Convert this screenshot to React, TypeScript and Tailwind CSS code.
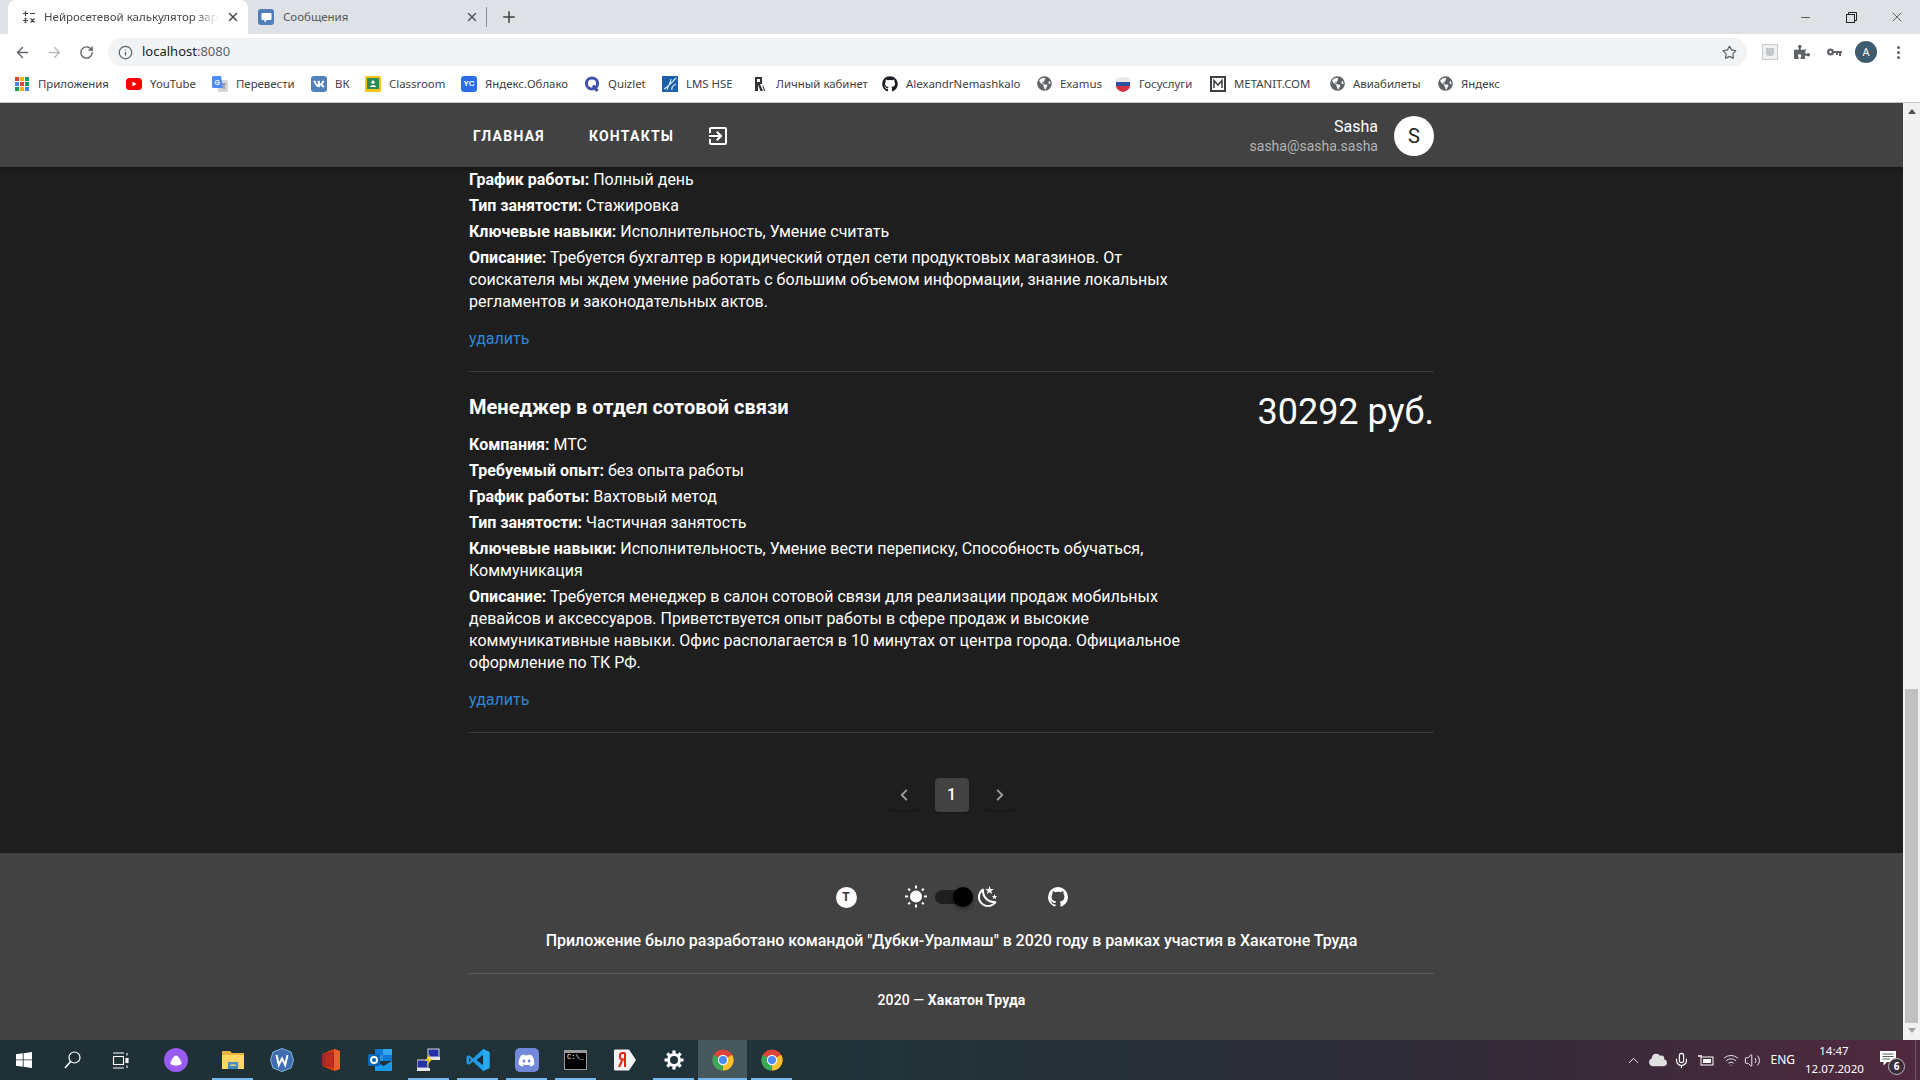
import React from "react";
import { ArrowLeft, ArrowRight, RotateCw, Info, Star, X, Plus, Minus, ChevronLeft, ChevronRight, ChevronUp, Mic, Volume2, Wifi } from "lucide-react";
import { FaGithub, FaVk, FaDiscord, FaGlobeAmericas, FaPuzzlePiece, FaCloud } from "react-icons/fa";

const chromeFont = "font-['Noto_Sans','Open_Sans',sans-serif]";

const GITHUB = "M12,2A10,10 0 0,0 2,12C2,16.42 4.87,20.17 8.84,21.5C9.34,21.58 9.5,21.27 9.5,21C9.5,20.77 9.5,20.14 9.5,19.31C6.73,19.91 6.14,17.97 6.14,17.97C5.68,16.81 5.03,16.5 5.03,16.5C4.12,15.88 5.1,15.9 5.1,15.9C6.1,15.97 6.63,16.93 6.63,16.93C7.5,18.45 8.97,18 9.54,17.76C9.63,17.11 9.89,16.67 10.17,16.42C7.95,16.17 5.62,15.31 5.62,11.5C5.62,10.39 6,9.5 6.65,8.79C6.55,8.54 6.2,7.5 6.75,6.15C6.75,6.15 7.59,5.88 9.5,7.17C10.29,6.95 11.15,6.84 12,6.84C12.85,6.84 13.71,6.95 14.5,7.17C16.41,5.88 17.25,6.15 17.25,6.15C17.8,7.5 17.45,8.54 17.35,8.79C18,9.5 18.38,10.39 18.38,11.5C18.38,15.32 16.04,16.16 13.81,16.41C14.17,16.72 14.5,17.33 14.5,18.26C14.5,19.6 14.5,20.68 14.5,21C14.5,21.27 14.66,21.59 15.17,21.5C19.14,20.16 22,16.42 22,12A10,10 0 0,0 12,2Z";

function Chrome({ size = 22 }: { size?: number }) {
  return (
    <svg width={size} height={size} viewBox="0 0 24 24">
      <circle cx="12" cy="12" r="11.5" fill="#db4437" />
      <path d="M12 12 L22 6.2 A11.5 11.5 0 0 1 12 23.5 Z" fill="#fbc02d" />
      <path d="M12 12 L12 23.5 A11.5 11.5 0 0 1 2 6.2 Z" fill="#3aa757" />
      <circle cx="12" cy="12" r="5.6" fill="#fff" />
      <circle cx="12" cy="12" r="4.4" fill="#4a8af4" />
    </svg>
  );
}

const bookmarks: { label: string; cell: string; icon: React.ReactNode }[] = [
  {
    label: "Приложения",
    cell: "w-[112px]",
    icon: (
      <svg width="16" height="16" viewBox="0 0 16 16">
        {[
          ["#db4437", 1, 1], ["#f4b400", 6, 1], ["#0f9d58", 11, 1],
          ["#4285f4", 1, 6], ["#db4437", 6, 6], ["#0f9d58", 11, 6],
          ["#0f9d58", 1, 11], ["#f4b400", 6, 11], ["#4285f4", 11, 11],
        ].map(([c, x, y], i) => (
          <rect key={i} x={x as number} y={y as number} width="4" height="4" fill={c as string} />
        ))}
      </svg>
    ),
  },
  {
    label: "YouTube",
    cell: "w-[86px]",
    icon: (
      <svg width="16" height="16" viewBox="0 0 16 16">
        <rect x="0" y="2" width="16" height="12" rx="3.5" fill="#f00" />
        <path d="M6.4 5.4 L10.6 8 L6.4 10.6 Z" fill="#fff" />
      </svg>
    ),
  },
  {
    label: "Перевести",
    cell: "w-[99px]",
    icon: (
      <svg width="16" height="16" viewBox="0 0 16 16">
        <rect x="6" y="4" width="10" height="12" rx="1" fill="#d5d5d5" />
        <path d="M10 8 L14 8 M12 8 L12 13" stroke="#777" strokeWidth="1" />
        <path d="M1.5 0 H9 L11 12 H1.5 A1.5 1.5 0 0 1 0 10.5 V1.5 A1.5 1.5 0 0 1 1.5 0 Z" fill="#4c8bf5" />
        <text x="2.5" y="8.5" fontSize="7" fontWeight="700" fill="#fff" fontFamily="Liberation Sans">G</text>
      </svg>
    ),
  },
  {
    label: "ВК",
    cell: "w-[54px]",
    icon: (
      <span className="w-4 h-4 rounded-[3px] bg-[#5181b8] flex items-center justify-center text-white">
        <FaVk size={12} />
      </span>
    ),
  },
  {
    label: "Classroom",
    cell: "w-[96px]",
    icon: (
      <svg width="16" height="16" viewBox="0 0 16 16">
        <rect width="16" height="16" rx="1.5" fill="#f5c518" />
        <rect x="2" y="2" width="12" height="11" fill="#2e8b57" />
        <circle cx="8" cy="6.2" r="1.6" fill="#fff" />
        <path d="M4.8 11 C5 8.8 11 8.8 11.2 11 Z" fill="#fff" />
      </svg>
    ),
  },
  {
    label: "Яндекс.Облако",
    cell: "w-[123px]",
    icon: (
      <span className="w-4 h-4 rounded-[3px] bg-[#2a6fe8] flex items-center justify-center text-white text-[8px] font-bold font-['Liberation_Sans',sans-serif]">
        YC
      </span>
    ),
  },
  {
    label: "Quizlet",
    cell: "w-[78px]",
    icon: (
      <svg width="16" height="16" viewBox="0 0 16 16">
        <circle cx="8" cy="7.5" r="5.6" fill="none" stroke="#3f51a8" strokeWidth="3" />
        <path d="M9 9.5 L13.5 15" stroke="#3f51a8" strokeWidth="3" />
      </svg>
    ),
  },
  {
    label: "LMS HSE",
    cell: "w-[90px]",
    icon: (
      <svg width="16" height="16" viewBox="0 0 16 16">
        <rect width="16" height="16" fill="#1d5fa8" />
        <path d="M2 13 C7 10 10 6 14 2 M5 14 C6 9 9 7 9 3 M10 14 C9 11 12 9 14 8" stroke="#dcecf8" strokeWidth="1.1" fill="none" />
      </svg>
    ),
  },
  {
    label: "Личный кабинет",
    cell: "w-[130px]",
    icon: (
      <svg width="16" height="16" viewBox="0 0 16 16">
        <path d="M3 1 H10 V8 H8 L11 15 H8.5 L6 9 V15 H3 Z" fill="#333" />
        <path d="M5 3 H8 V6 H5 Z" fill="#fff" />
        <path d="M11 9 L13.5 15 H12 L10.5 11 Z" fill="#555" />
      </svg>
    ),
  },
  { label: "AlexandrNemashkalo", cell: "w-[154px]", icon: <FaGithub size={16} color="#1b1f23" /> },
  { label: "Examus", cell: "w-[79px]", icon: <FaGlobeAmericas size={15} color="#5f6368" /> },
  {
    label: "Госуслуги",
    cell: "w-[95px]",
    icon: (
      <svg width="16" height="16" viewBox="0 0 16 16">
        <path d="M1 3 C4 0.5 12 0.5 15 3 V6 H1 Z" fill="#e8e8e8" />
        <rect x="1" y="6" width="14" height="4" fill="#2b4fa3" />
        <path d="M1 10 H15 C15 13 11 15.5 8 16 C5 15.5 1 13 1 10 Z" fill="#d6303c" />
      </svg>
    ),
  },
  {
    label: "METANIT.COM",
    cell: "w-[119px]",
    icon: (
      <svg width="16" height="16" viewBox="0 0 16 16">
        <rect x="1" y="1" width="14" height="14" fill="none" stroke="#3c4043" strokeWidth="2" />
        <path d="M4 12 V4.5 L8 9 L12 4.5 V12" fill="none" stroke="#3c4043" strokeWidth="1.5" />
      </svg>
    ),
  },
  { label: "Авиабилеты", cell: "w-[108px]", icon: <FaGlobeAmericas size={15} color="#5f6368" /> },
  { label: "Яндекс", cell: "w-[80px]", icon: <FaGlobeAmericas size={15} color="#5f6368" /> },
];

function ChromeBar() {
  return (
    <div className={`${chromeFont} shrink-0 bg-white border-b border-[#c8c8c8]`}>
      <div className="h-[34px] bg-[#dee1e6] flex items-stretch pl-2">
        <div className="w-[240px] bg-white rounded-t-lg flex items-center pl-3.5 pr-2 gap-2">
          <svg width="14" height="14" viewBox="0 0 14 14" className="shrink-0" stroke="#3c4043" strokeWidth="1.1" fill="none">
            <path d="M1 3.5 H6 M3.5 1 V6 M8 3.5 H13 M1 10.5 H6 M8.5 8.5 L12.5 12.5 M12.5 8.5 L8.5 12.5" />
            <circle cx="3.5" cy="8.7" r=".5" fill="#3c4043" />
            <circle cx="3.5" cy="12.3" r=".5" fill="#3c4043" />
          </svg>
          <span className="flex-1 overflow-hidden whitespace-nowrap text-[11.5px] text-[#45494d] [mask-image:linear-gradient(to_right,black_88%,transparent)]">
            Нейросетевой калькулятор заработной платы
          </span>
          <X size={14} strokeWidth={2.5} color="#45494d" className="shrink-0" />
        </div>
        <div className="w-[236px] flex items-center pl-2.5 pr-[5px] gap-2">
          <span className="w-4 h-4 rounded-[3px] bg-[#4f7fb5] flex items-center justify-center shrink-0">
            <svg width="11" height="11" viewBox="0 0 11 11"><path d="M1.5 1 H9.5 A1 1 0 0 1 10.5 2 V7 A1 1 0 0 1 9.5 8 H6 L3.5 10.5 V8 H1.5 A1 1 0 0 1 .5 7 V2 A1 1 0 0 1 1.5 1 Z" fill="#fff" /></svg>
          </span>
          <span className="flex-1 text-[11.5px] ml-px text-[#55595e]">Сообщения</span>
          <X size={14} strokeWidth={2.5} color="#55595e" />
        </div>
        <div className="flex items-center">
          <span className="w-px h-5 bg-[#8a8e93] ml-0.5" />
          <Plus size={18} strokeWidth={2} color="#3c4043" className="ml-[13px]" />
        </div>
        <div className="flex-1 flex items-center justify-end text-[#222]">
          <span className="w-[46px] flex justify-center"><Minus size={13} strokeWidth={1.3} /></span>
          <span className="w-[46px] flex justify-center">
            <svg width="11" height="11" viewBox="0 0 11 11" fill="none" stroke="#222"><path d="M2.5 2.5 V.5 H10.5 V8.5 H8.5" /><rect x=".5" y="2.5" width="8" height="8" /></svg>
          </span>
          <span className="w-[46px] flex justify-center"><X size={16} strokeWidth={1} /></span>
        </div>
      </div>
      <div className="h-[34px] flex items-start pt-1 pl-1.5">
        <div className="h-7 flex items-center text-[#5f6368]">
          <span className="w-8 flex justify-center"><ArrowLeft size={17} strokeWidth={2} /></span>
          <span className="w-8 flex justify-center"><ArrowRight size={17} strokeWidth={2} color="#b6b9bd" /></span>
          <span className="w-8 flex justify-center"><RotateCw size={15} strokeWidth={2.2} /></span>
        </div>
        <div className="h-7 ml-1.5 w-[1639px] bg-[#f1f3f4] rounded-full flex items-center pl-2.5 pr-2.5">
          <Info size={15} color="#5f6368" />
          <span className="ml-[9px] text-[13px] text-[#202124]">localhost<span className="text-[#5f6368]">:8080</span></span>
          <Star size={15} color="#5f6368" className="ml-auto" />
        </div>
        <div className="h-7 flex-1 flex items-center text-[#5f6368]">
          <span className="ml-[15px] w-4 h-4 border border-[#c9ccd0] bg-[#eef0f1] flex items-center justify-center">
            <span className="w-2 h-2 rounded-b-[3px] bg-[#c4c8cc]" />
          </span>
          <FaPuzzlePiece size={16} className="ml-[16px]" />
          <svg width="15" height="9" viewBox="0 0 15 9" className="ml-[17px]" fill="#5f6368">
            <path fillRule="evenodd" d="M3.5 0.5 A3.5 3.5 0 1 1 3.5 7.5 A3.5 3.5 0 1 1 3.5 0.5 Z M3.5 2.8 A1.2 1.2 0 1 0 3.5 5.2 A1.2 1.2 0 1 0 3.5 2.8 Z" />
            <path d="M6 3 H15 V5 H14 V8 H12 V5 H11 V7 H9 V5 H6 Z" />
          </svg>
          <span className="ml-[13px] w-[22px] h-[22px] rounded-full bg-[#3f5b6f] text-white text-[11px] flex items-center justify-center">A</span>
          <span className="ml-5 flex flex-col gap-[2px]">
            <span className="w-[3px] h-[3px] rounded-full bg-[#5f6368]" />
            <span className="w-[3px] h-[3px] rounded-full bg-[#5f6368]" />
            <span className="w-[3px] h-[3px] rounded-full bg-[#5f6368]" />
          </span>
        </div>
      </div>
      <div className="h-[34px] flex items-center pl-3.5 pb-0.5">
        {bookmarks.map((b) => (
          <div key={b.label} className={`${b.cell} flex items-center gap-2 shrink-0`}>
            <span className="w-4 h-4 flex items-center justify-center shrink-0">{b.icon}</span>
            <span className="text-[11.4px] text-[#3c4043] whitespace-nowrap">{b.label}</span>
          </div>
        ))}
      </div>
    </div>
  );
}

function Row({ k, v }: { k: string; v: string }) {
  return (
    <p className="mb-1 leading-[22px]">
      <b className="font-bold">{k}:</b> {v}
    </p>
  );
}

function Page() {
  return (
    <div className="flex-1 min-w-0 flex flex-col overflow-hidden font-['Roboto',sans-serif] text-white">
      <header className="h-16 shrink-0 bg-[#424242] shadow-[0_2px_4px_rgba(0,0,0,0.3)] z-10 pt-px">
        <div className="w-[965px] mx-auto h-full flex items-center">
          <span className="ml-1 mt-px text-[14px] font-bold tracking-[1.25px]">ГЛАВНАЯ</span>
          <span className="ml-11 mt-px text-[14px] font-bold tracking-[1.25px]">КОНТАКТЫ</span>
          <svg width="24" height="24" viewBox="0 0 24 24" fill="#fff" className="ml-[32px]">
            <path d="M10.09,15.59L11.5,17L16.5,12L11.5,7L10.09,8.41L12.67,11H3V13H12.67L10.09,15.59M19,3H5C3.89,3 3,3.9 3,5V9H5V5H19V19H5V15H3V19A2,2 0 0,0 5,21H19A2,2 0 0,0 21,19V5C21,3.9 20.1,3 19,3Z" />
          </svg>
          <div className="ml-auto text-right">
            <div className="text-[16px] leading-[20px]">Sasha</div>
            <div className="text-[14px] leading-[18px] text-[#b5b5b5]">sasha@sasha.sasha</div>
          </div>
          <span className="ml-4 w-10 h-10 rounded-full bg-white text-[#222] text-[20px] flex items-center justify-center">S</span>
        </div>
      </header>
      <main className="flex-1 min-h-0 overflow-hidden bg-[#1e1e1e]">
        <div className="w-[965px] mx-auto text-[16px] pt-[2px]">
          <Row k="График работы" v="Полный день" />
          <Row k="Тип занятости" v="Стажировка" />
          <Row k="Ключевые навыки" v="Исполнительность, Умение считать" />
          <p className="leading-[22px] w-[724px]">
            <b className="font-bold">Описание:</b> Требуется бухгалтер в юридический отдел сети продуктовых магазинов. От соискателя мы ждем умение работать с большим объемом информации, знание локальных регламентов и законодательных актов.
          </p>
          <div className="mt-[15px] pb-[21px] leading-[22px] text-[#2f87d2] border-b border-[#3a3a3a]">удалить</div>
          <div className="pt-[19px] pb-[21px] border-b border-[#3a3a3a]">
            <div className="flex justify-between items-start">
              <h2 className="text-[20px] font-bold leading-8 mb-[11px]">Менеджер в отдел сотовой связи</h2>
              <div className="text-[36px] leading-10 mt-px">30292 руб.</div>
            </div>
            <div className="w-[724px]">
              <Row k="Компания" v="МТС" />
              <Row k="Требуемый опыт" v="без опыта работы" />
              <Row k="График работы" v="Вахтовый метод" />
              <Row k="Тип занятости" v="Частичная занятость" />
              <Row k="Ключевые навыки" v="Исполнительность, Умение вести переписку, Способность обучаться, Коммуникация" />
              <p className="leading-[22px]">
                <b className="font-bold">Описание:</b> Требуется менеджер в салон сотовой связи для реализации продаж мобильных девайсов и аксессуаров. Приветствуется опыт работы в сфере продаж и высокие коммуникативные навыки. Офис располагается в 10 минутах от центра города. Официальное оформление по ТК РФ.
              </p>
            </div>
            <div className="mt-[15px] leading-[22px] text-[#2f87d2]">удалить</div>
          </div>
          <div className="mt-[45px] flex justify-center items-center gap-[15px]">
            <span className="w-8 h-[30px] rounded bg-[#1e1e1e] shadow-[0_1px_2px_rgba(0,0,0,0.25)] flex items-center justify-center"><ChevronLeft size={18} color="#9a9a9a" strokeWidth={2.5} /></span>
            <span className="w-[34px] h-[34px] rounded bg-[#424242] shadow-[0_1px_2px_rgba(0,0,0,0.3)] flex items-center justify-center text-[16px] font-medium">1</span>
            <span className="w-8 h-[30px] rounded bg-[#1e1e1e] shadow-[0_1px_2px_rgba(0,0,0,0.25)] flex items-center justify-center"><ChevronRight size={18} color="#9a9a9a" strokeWidth={2.5} /></span>
          </div>
        </div>
      </main>
      <footer className="h-[187px] shrink-0 bg-[#424242] pt-8">
        <div className="w-[965px] mx-auto">
          <div className="h-6 flex items-center justify-center pl-0.5">
            <span className="w-[21px] h-[21px] rounded-full bg-white text-[#333] text-[12px] font-bold flex items-center justify-center">T</span>
            <svg width="24" height="24" viewBox="0 0 24 24" fill="#fff" className="ml-[47px]">
              <path d="M3.55,18.54L4.96,19.95L6.76,18.16L5.34,16.74M11,22.45C11.32,22.45 13,22.45 13,22.45V19.5H11M12,5.5A6,6 0 0,0 6,11.5A6,6 0 0,0 12,17.5A6,6 0 0,0 18,11.5C18,8.18 15.31,5.5 12,5.5M20,12.5H23V10.5H20M17.24,18.16L19.04,19.95L20.45,18.54L18.66,16.74M20.45,4.46L19.04,3.05L17.24,4.84L18.66,6.26M13,0.55H11V3.5H13M4,10.5H1V12.5H4M6.76,4.84L4.96,3.05L3.55,4.46L5.34,6.26L6.76,4.84Z" />
            </svg>
            <span className="ml-[7px] w-[38px] h-5 flex items-center justify-end relative">
              <span className="absolute left-0 w-[34px] h-3.5 rounded-full bg-[#1f1f1f]" />
              <span className="relative w-5 h-5 rounded-full bg-black shadow-[0_2px_4px_rgba(0,0,0,0.4)]" />
            </span>
            <svg width="24" height="24" viewBox="0 0 24 24" fill="#fff" className="ml-[3px]">
              <path d="M17.75,4.09L15.22,6.03L16.13,9.09L13.5,7.28L10.87,9.09L11.78,6.03L9.25,4.09L12.44,4L13.5,1L14.56,4L17.75,4.09M21.25,11L19.61,12.25L20.2,14.23L18.5,13.06L16.8,14.23L17.39,12.25L15.75,11L17.81,10.95L18.5,9L19.19,10.95L21.25,11M18.97,15.95C19.8,15.87 20.69,17.05 20.16,17.8C19.84,18.25 19.5,18.67 19.08,19.07C15.17,23 8.84,23 4.94,19.07C1.03,15.17 1.03,8.83 4.94,4.93C5.34,4.53 5.76,4.17 6.21,3.85C6.96,3.32 8.14,4.21 8.06,5.04C7.79,7.9 8.75,10.87 10.95,13.06C13.14,15.26 16.1,16.22 18.97,15.95M17.33,17.97C14.5,17.81 11.7,16.64 9.53,14.5C7.36,12.31 6.2,9.5 6.04,6.68C3.23,9.82 3.34,14.64 6.35,17.66C9.37,20.67 14.19,20.78 17.33,17.97Z" />
            </svg>
            <svg width="24" height="24" viewBox="0 0 24 24" fill="#fff" className="ml-[46px]"><path d={GITHUB} /></svg>
          </div>
          <p className="mt-5 text-center text-[16px] leading-6 font-medium tracking-[-0.05px]">
            Приложение было разработано командой "Дубки-Уралмаш" в 2020 году в рамках участия в Хакатоне Труда
          </p>
          <div className="mt-5 border-t border-[#5a5a5a] pt-4 text-center text-[14px] leading-5 font-medium tracking-[0.1px]">
            2020 — <b className="font-bold">Хакатон Труда</b>
          </div>
        </div>
      </footer>
    </div>
  );
}

function Scrollbar() {
  return (
    <div className="w-[17px] shrink-0 bg-[#f1f1f1] flex flex-col items-center justify-between">
      <div className="flex-1 w-full flex flex-col items-center">
        <span className="mt-[6px] w-0 h-0 border-x-[4px] border-x-transparent border-b-[5px] border-b-[#505050]" />
        <span className="mt-[575px] w-[13px] h-[334px] bg-[#c1c1c1]" />
        <span className="mt-[5px] w-0 h-0 border-x-[4px] border-x-transparent border-t-[5px] border-t-[#a3a3a3]" />
      </div>
    </div>
  );
}

const taskIcons: { key: string; on?: boolean; active?: boolean; el: React.ReactNode }[] = [
  {
    key: "explorer", on: true,
    el: (
      <svg width="24" height="24" viewBox="0 0 24 24">
        <path d="M1 3 H9 L11 5 H23 V21 H1 Z" fill="#e8b53c" />
        <rect x="1" y="7" width="22" height="14" fill="#ffd762" />
        <path d="M7 20 V14 H17 V20 H14.5 V16.5 H9.5 V20 Z" fill="#4a90c8" />
        <rect x="7" y="18" width="10" height="3" fill="#3a88c4" />
      </svg>
    ),
  },
  {
    key: "word",
    el: (
      <svg width="24" height="24" viewBox="0 0 24 24">
        <path d="M12 0.5 L21 4 L23.5 12 L21 20 L12 23.5 L3 20 L0.5 12 L3 4 Z" fill="#3f6db4" stroke="#7fb2d8" />
        <path d="M6.5 7 L8.8 17 L12 10.5 L15.2 17 L17.5 7" fill="none" stroke="#fff" strokeWidth="2" />
      </svg>
    ),
  },
  {
    key: "office",
    el: (
      <svg width="24" height="24" viewBox="0 0 24 24">
        <path d="M3 6 L15 1 L21 3 V21 L15 23 L3 18 Z" fill="#d83b01" />
        <path d="M15 1 L21 3 V21 L15 23 Z" fill="#e8602c" />
        <path d="M3 6 L15 4 V19 L3 18 Z" fill="#a4262c" />
        <path d="M6.5 7.5 L14 5.5 V18 L6.5 16.5 Z" fill="#eb3c00" opacity=".35" />
      </svg>
    ),
  },
  {
    key: "outlook",
    el: (
      <svg width="24" height="24" viewBox="0 0 24 24">
        <rect x="7" y="1" width="17" height="12" fill="#0f78d4" />
        <rect x="15" y="1" width="9" height="6" fill="#35a4ee" />
        <rect x="7" y="7" width="8" height="6" fill="#2b8fe0" />
        <path d="M7 13 L15.5 18 L24 13 V23 H7 Z" fill="#1a9be8" />
        <rect x="0" y="6" width="12" height="12" rx="1" fill="#0a64b4" />
        <circle cx="6" cy="12" r="3" fill="none" stroke="#fff" strokeWidth="1.8" />
      </svg>
    ),
  },
  {
    key: "network", on: true,
    el: (
      <svg width="24" height="24" viewBox="0 0 24 24">
        <rect x="11" y="1" width="11" height="8" fill="#2233a8" stroke="#d8d8d8" />
        <rect x="10" y="9" width="13" height="3" fill="#e4e4e4" />
        <rect x="0" y="12" width="11" height="8" fill="#2233a8" stroke="#d8d8d8" />
        <rect x="0" y="20" width="13" height="3" fill="#e4e4e4" />
        <path d="M13 6 L8 13 L12 12.5 L9 18 L16 10.5 L12 11 Z" fill="#f5d20e" />
      </svg>
    ),
  },
  {
    key: "vscode", on: true,
    el: (
      <svg width="24" height="24" viewBox="0 0 24 24">
        <path d="M17 1 L23.5 4 V20 L17 23 L7 13.5 L3 16.7 L0.5 15.5 V8.5 L3 7.3 L7 10.5 Z" fill="#1c9be8" />
        <path d="M17 7 L10.5 12 L17 17 Z" fill="#20262c" />
        <path d="M17 1 L23.5 4 V20 L17 23 Z" fill="#27a9f0" />
        <path d="M3 9.8 L5 12 L3 14.2 Z" fill="#20262c" />
      </svg>
    ),
  },
  {
    key: "discord", on: true,
    el: (
      <span className="w-[24px] h-[24px] rounded-[5px] bg-[#7289da] flex items-center justify-center text-white"><FaDiscord size={17} /></span>
    ),
  },
  {
    key: "cmd", on: true,
    el: (
      <span className="w-[23px] h-[20px] bg-black border border-[#9a9a9a] border-t-[3px] text-white text-[7px] leading-[7px] font-['Liberation_Mono',monospace] pl-[2px] pt-[1px]">C:\_</span>
    ),
  },
  {
    key: "yandex",
    el: (
      <svg width="24" height="24" viewBox="0 0 24 24">
        <path d="M2 1.5 H16 L23 12 L16 22.5 H2 A1.5 1.5 0 0 1 1 21 V3 A1.5 1.5 0 0 1 2 1.5 Z" fill="#f4f4f4" />
        <path d="M12 5 V19 M12 5 H9.5 C6 5 6 11.5 9.5 11.5 H12 M9.5 11.5 L6 19" fill="none" stroke="#e2231a" strokeWidth="2" />
      </svg>
    ),
  },
  {
    key: "settings", on: true,
    el: (
      <svg width="20" height="20" viewBox="0 0 20 20">
        <circle cx="10" cy="10" r="5.5" fill="none" stroke="#fff" strokeWidth="3" />
        <g stroke="#fff" strokeWidth="3.2">
          <path d="M10 0.5 V3.5 M10 16.5 V19.5 M0.5 10 H3.5 M16.5 10 H19.5 M3.3 3.3 L5.4 5.4 M14.6 14.6 L16.7 16.7 M16.7 3.3 L14.6 5.4 M5.4 14.6 L3.3 16.7" />
        </g>
      </svg>
    ),
  },
  { key: "chrome", on: true, active: true, el: <Chrome /> },
  { key: "chrome2", on: true, el: <Chrome /> },
];

function Taskbar() {
  return (
    <div className={`${chromeFont} h-10 shrink-0 flex items-stretch text-white bg-[linear-gradient(to_right,#1f2f36_0%,#21333a_45%,#2f2b36_75%,#50293f_100%)]`}>
      <div className="w-12 flex items-center justify-center">
        <svg width="16" height="16" viewBox="0 0 16 16" fill="#fff">
          <path d="M0 2.3 L6.8 1.3 V7.5 H0 Z M7.6 1.2 L16 0 V7.5 H7.6 Z M0 8.3 H6.8 V14.7 L0 13.7 Z M7.6 8.3 H16 V16 L7.6 14.8 Z" />
        </svg>
      </div>
      <div className="w-12 flex items-center justify-center">
        <svg width="17" height="18" viewBox="0 0 17 18" fill="none" stroke="#fff" strokeWidth="1.2">
          <circle cx="10.5" cy="6.5" r="5.5" />
          <path d="M6.6 10.4 L1 17" strokeWidth="1.5" />
        </svg>
      </div>
      <div className="w-12 flex items-center justify-center">
        <svg width="17" height="17" viewBox="0 0 17 17" fill="none" stroke="#fff" strokeWidth="1.1">
          <path d="M1 1 H12 M1 16 H12" /><rect x="1.5" y="4.5" width="10" height="8" />
          <path d="M15 1 V3.5 M15 13.5 V16" /><rect x="14" y="6.5" width="2" height="4" fill="#fff" />
        </svg>
      </div>
      <div className="w-[64px] flex items-center justify-center">
        <span className="w-6 h-6 rounded-full bg-[#9a5bf0] flex items-center justify-center">
          <svg width="12" height="11" viewBox="0 0 12 11"><path d="M6 0.5 C8 0.5 11.5 6 11.5 8 C11.5 10 8.5 10.5 6 10.5 C3.5 10.5 0.5 10 0.5 8 C0.5 6 4 0.5 6 0.5 Z" fill="#fff" /></svg>
        </span>
      </div>
      {taskIcons.map((t) => (
        <div key={t.key} className={`w-[49px] flex items-center justify-center relative ${t.active ? "bg-[#46585c]" : ""}`}>
          {t.el}
          {t.on && <span className={`absolute bottom-0 h-0.5 bg-[#76b9ed] ${t.active ? "left-0 right-0" : "left-1 right-1"}`} />}
        </div>
      ))}
      <div className="flex-1 flex items-center justify-end">
        <ChevronUp size={17} strokeWidth={1.3} />
        <FaCloud size={18} className="ml-[7px]" color="#e0e0e0" />
        <Mic size={17} strokeWidth={1.6} className="ml-[6px]" />
        <svg width="16" height="11" viewBox="0 0 16 11" className="ml-[8px]">
          <rect x="3" y="2" width="12" height="8" fill="none" stroke="#fff" />
          <rect x="5" y="4" width="8" height="4" fill="#fff" />
          <path d="M0 1 H4 M1 0 V2 M3 0 V2" stroke="#fff" />
        </svg>
        <Wifi size={16} strokeWidth={1.4} className="ml-[9px] opacity-90" />
        <Volume2 size={17} strokeWidth={1.3} className="ml-[5px]" />
        <span className="ml-[9px] text-[12px]">ENG</span>
        <div className="ml-2.5 text-[11.5px] leading-[18px] text-center w-[58px]">
          <div>14:47</div>
          <div>12.07.2020</div>
        </div>
        <div className="ml-3 w-[40px] h-full flex items-center justify-start relative">
          <svg width="17" height="15" viewBox="0 0 17 15" className="ml-[5px] -mt-1">
            <path d="M0 0 H16 V11 H7 L3.5 14.5 V11 H0 Z" fill="#fff" />
            <path d="M2.5 3 H13.5 M2.5 5.5 H13.5 M2.5 8 H10" stroke="#333" strokeWidth=".8" />
          </svg>
          <span className="absolute left-[13px] top-[18px] w-[17px] h-[17px] rounded-full bg-[#3a2c38] border border-[#bbb] text-[10px] font-bold flex items-center justify-center">6</span>
        </div>
        <span className="w-px h-full bg-[#6a5465] mr-1" />
      </div>
    </div>
  );
}

export default function App() {
  return (
    <div className="h-screen w-full overflow-hidden flex flex-col">
      <ChromeBar />
      <div className="flex-1 min-h-0 flex items-stretch">
        <Page />
        <Scrollbar />
      </div>
      <Taskbar />
    </div>
  );
}
